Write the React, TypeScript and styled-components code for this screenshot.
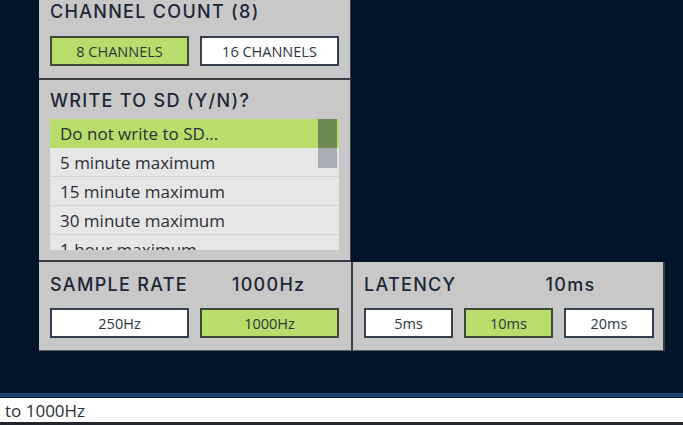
import React from "react";
import styled, { createGlobalStyle } from "styled-components";

const Global = createGlobalStyle`
  html, body { margin: 0; padding: 0; }
  body { background: #011429; font-family: "Open Sans", sans-serif; }
`;

const Page = styled.div`
  width: 683px;
  height: 425px;
  display: flex;
  flex-direction: column;
  background: #011429;
  overflow: hidden;
`;

const Main = styled.div`
  flex: 1;
  padding-left: 39px;
  display: flex;
  flex-direction: column;
`;

const TopPanel = styled.div`
  width: 311px;
  background: #c8c8c8;
  border-right: 1px solid #3c3f44;
  display: flex;
  flex-direction: column;
`;

const Section = styled.div<{ $pt: number; $h: number; $border?: boolean }>`
  box-sizing: border-box;
  height: ${(p) => p.$h}px;
  padding: ${(p) => p.$pt}px 11px 0 11px;
  border-bottom: ${(p) => (p.$border ? "2px solid #3a3d42" : "none")};
  display: flex;
  flex-direction: column;
`;

const Title = styled.div<{ $mb: number }>`
  font-family: "Inter", sans-serif;
  font-weight: 500;
  font-size: 18px;
  line-height: 22px;
  color: #1c2636;
  margin-bottom: ${(p) => p.$mb}px;
  display: flex;
  letter-spacing: 1.3px;
  white-space: nowrap;
`;

const Value = styled.span<{ $x: number }>`
  margin-left: ${(p) => p.$x}px;
`;

const ButtonRow = styled.div<{ $gap: number }>`
  display: flex;
  gap: ${(p) => p.$gap}px;
`;

const Btn = styled.div<{ $active?: boolean; $w: number }>`
  box-sizing: border-box;
  width: ${(p) => p.$w}px;
  height: 30px;
  border: 2px solid ${(p) => (p.$active ? "#3d4a36" : "#34404f")};
  background: ${(p) => (p.$active ? "#b9dd6a" : "#ffffff")};
  display: flex;
  align-items: center;
  justify-content: center;
  font-family: "Open Sans", sans-serif;
  font-size: 14.5px;
  color: #2d3540;
`;

const List = styled.div`
  position: relative;
  height: 131px;
  overflow: hidden;
  background: #e6e6e6;
`;

const Row = styled.div<{ $selected?: boolean }>`
  box-sizing: border-box;
  height: 29px;
  padding-left: 10px;
  display: flex;
  align-items: center;
  font-family: "Open Sans", sans-serif;
  font-size: 17px;
  color: #2b2f36;
  white-space: nowrap;
  background: ${(p) => (p.$selected ? "#b9dd6a" : "#e6e6e6")};
  border-bottom: 1px solid ${(p) => (p.$selected ? "#b9dd6a" : "#d2d2d2")};
`;

const Thumb = styled.div`
  position: absolute;
  left: 268px;
  top: 0;
  width: 19px;
  height: 49px;
  background: linear-gradient(#6d8a50 0, #6d8a50 29px, #a8acb3 29px);
`;

const BottomPanel = styled.div`
  width: 626px;
  height: 89px;
  box-sizing: border-box;
  background: #c8c8c8;
  border-right: 2px solid #3a3d42;
  border-bottom: 1px solid #5a5d62;
  display: grid;
  grid-template-columns: 312px 1fr;
`;

const Cell = styled.div<{ $divider?: boolean }>`
  padding: 12px 11px 0 11px;
  border-left: ${(p) => (p.$divider ? "2px solid #3a3d42" : "none")};
  display: flex;
  flex-direction: column;
`;

const BlueLine = styled.div`
  height: 4px;
  background: #1d4571;
  margin-bottom: 1px;
`;

const Status = styled.div`
  height: 24px;
  background: #ffffff;
  padding-left: 5px;
  display: flex;
  align-items: center;
  font-family: "Open Sans", sans-serif;
  font-size: 17px;
  color: #2b2f36;
  border-bottom: 3px solid #23272d;
`;

const rows = [
  "Do not write to SD...",
  "5 minute maximum",
  "15 minute maximum",
  "30 minute maximum",
  "1 hour maximum",
];

export default function App() {
  return (
    <Page>
      <Global />
      <Main>
        <TopPanel>
          <Section $pt={1} $h={80} $border>
            <Title $mb={13}>CHANNEL COUNT (8)</Title>
            <ButtonRow $gap={11}>
              <Btn $w={139} $active>8 CHANNELS</Btn>
              <Btn $w={139}>16 CHANNELS</Btn>
            </ButtonRow>
          </Section>
          <Section $pt={10} $h={182} $border>
            <Title $mb={7}>WRITE TO SD (Y/N)?</Title>
            <List>
              {rows.map((r, i) => (
                <Row key={r} $selected={i === 0}>
                  {r}
                </Row>
              ))}
              <Thumb />
            </List>
          </Section>
        </TopPanel>
        <BottomPanel>
          <Cell>
            <Title $mb={12}>
              SAMPLE RATE<Value $x={44}>1000Hz</Value>
            </Title>
            <ButtonRow $gap={11}>
              <Btn $w={139}>250Hz</Btn>
              <Btn $w={139} $active>1000Hz</Btn>
            </ButtonRow>
          </Cell>
          <Cell $divider>
            <Title $mb={12}>
              LATENCY<Value $x={89}>10ms</Value>
            </Title>
            <ButtonRow $gap={11}>
              <Btn $w={89}>5ms</Btn>
              <Btn $w={89} $active>10ms</Btn>
              <Btn $w={90}>20ms</Btn>
            </ButtonRow>
          </Cell>
        </BottomPanel>
      </Main>
      <BlueLine />
      <Status>to 1000Hz</Status>
    </Page>
  );
}
